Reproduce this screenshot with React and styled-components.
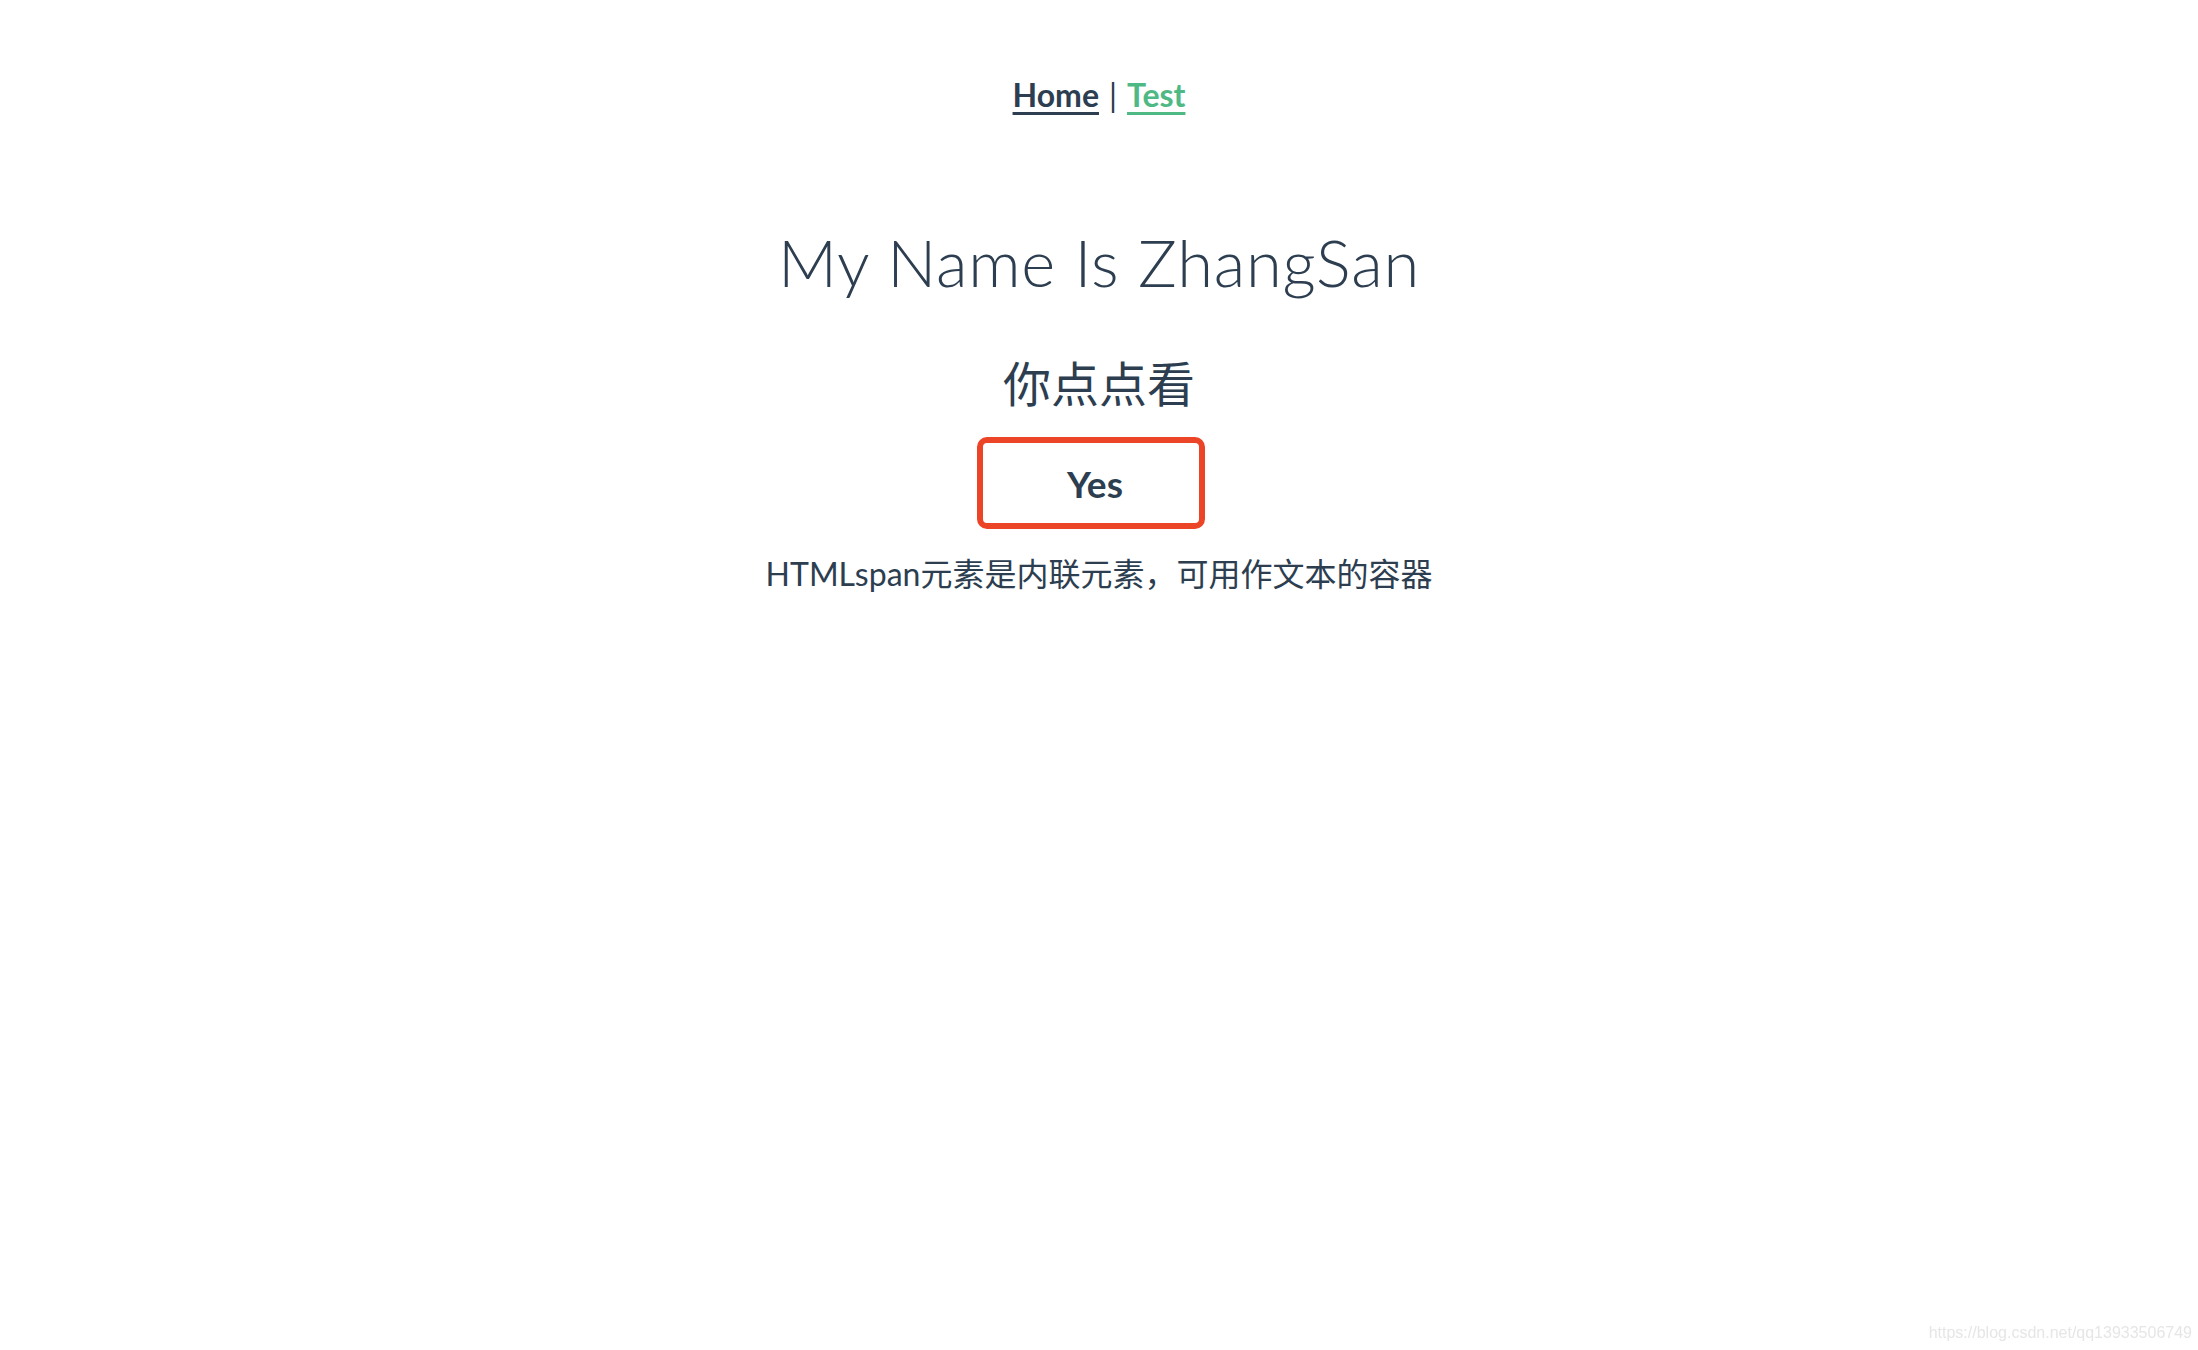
import React from 'react';
import styled, { createGlobalStyle } from 'styled-components';

const GlobalStyle = createGlobalStyle`
  html, body {
    background: #ffffff;
  }
  body {
    margin: 16px;
    font-family: Lato, "Noto Sans CJK SC", sans-serif;
    -webkit-font-smoothing: antialiased;
  }
`

const Page = styled.div`
  text-align: center;
  color: #2c3e50;
  min-height: 1318px;
`

const Nav = styled.nav`
  padding: 60px;
  line-height: 38px;
  font-size: 32px;
`

const NavLink = styled.a`
  font-weight: bold;
  color: ${props => props.active ? '#4fb985' : '#2c3e50'};
  text-decoration: underline;
  text-decoration-thickness: 3px;
  text-underline-offset: 5px;
  cursor: pointer;
`

const Divider = styled.span`
  margin: 0 10px;
  font-weight: normal;
`

const Content = styled.main`
  display: flex;
  flex-direction: column;
  align-items: center;
`

const Title = styled.h1`
  margin: 50px 0 0;
  font-size: 65px;
  line-height: 76px;
  font-weight: 300;
  letter-spacing: 0.8px;
`

const Subtitle = styled.h2`
  margin: 53px 0 0;
  font-size: 48px;
  line-height: 56px;
  font-weight: normal;
  font-family: "Noto Sans CJK SC", sans-serif;
`

const Button = styled.button`
  margin: 28px 16px 0 0;
  width: 228px;
  height: 92px;
  box-sizing: border-box;
  padding: 0 0 0 8px;
  border: 6px solid #ec4426;
  border-radius: 10px;
  background: #ffffff;
  color: #2c3e50;
  font-family: Lato, sans-serif;
  font-size: 37px;
  font-weight: bold;
  cursor: pointer;
`

const Note = styled.span`
  margin-top: 23px;
  font-size: 32px;
  line-height: 44px;
`

const Watermark = styled.div`
  position: fixed;
  right: 6px;
  bottom: 8px;
  font-family: "Liberation Sans", Arial, sans-serif;
  font-size: 16px;
  color: #e6e6e6;
`

export default function App() {
  return (
    <Page>
      <GlobalStyle />
      <Nav>
        <NavLink>Home</NavLink>
        <Divider>|</Divider>
        <NavLink active>Test</NavLink>
      </Nav>
      <Content>
        <Title>My Name Is ZhangSan</Title>
        <Subtitle>你点点看</Subtitle>
        <Button>Yes</Button>
        <Note>HTMLspan元素是内联元素，可用作文本的容器</Note>
      </Content>
      <Watermark>https://blog.csdn.net/qq13933506749</Watermark>
    </Page>
  );
}
